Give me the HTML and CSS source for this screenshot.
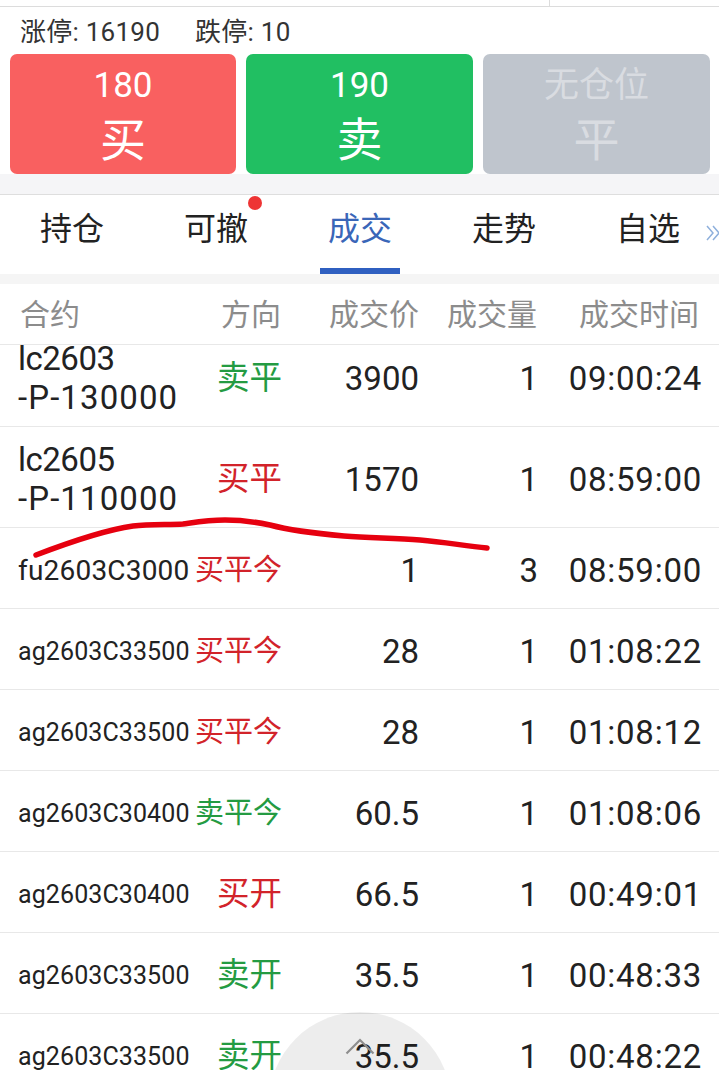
FILE: index.html
```html
<!DOCTYPE html>
<html lang="zh">
<head>
<meta charset="utf-8">
<title>成交</title>
<link rel="stylesheet" href="styles.css">
</head>
<body>
<div class="page">
  <div class="topbar"><span class="topdiv"></span></div>
  <div class="limits"><span>涨停: 16190</span><span>跌停: 10</span></div>
  <div class="actions">
    <div class="act buy"><span class="price">180</span><span class="label">买</span></div>
    <div class="act sell"><span class="price">190</span><span class="label">卖</span></div>
    <div class="act flat"><span class="price cjk">无仓位</span><span class="label">平</span></div>
  </div>
  <div class="band"></div>
  <nav class="tabs">
    <div class="tab">持仓</div>
    <div class="tab">可撤<i class="dot"></i></div>
    <div class="tab active">成交</div>
    <div class="tab">走势</div>
    <div class="tab">自选</div>
    <svg class="more" viewBox="0 0 16 20" width="16" height="20"><path d="M2 3l6 7-6 7M8 3l6 7-6 7" fill="none" stroke="#8fb0dc" stroke-width="1.5"/></svg>
  </nav>
  <div class="band2"></div>
  <div class="row head"><span>合约</span><span>方向</span><span>成交价</span><span>成交量</span><span>成交时间</span></div>
  <div class="list">
    <div class="row tall first"><span class="name long"><span class="l1">lc2603</span><span class="l2">-P-130000</span></span><span class="dir green">卖平</span><span>3900</span><span>1</span><span class="time">09:00:24</span></div>
    <div class="row tall"><span class="name long"><span class="l1">lc2605</span><span class="l2">-P-110000</span></span><span class="dir red">买平</span><span>1570</span><span>1</span><span class="time">08:59:00</span></div>
    <div class="row"><span class="name mid">fu2603C3000</span><span class="dir sm red">买平今</span><span>1</span><span>3</span><span class="time">08:59:00</span></div>
    <div class="row"><span class="name">ag2603C33500</span><span class="dir sm red">买平今</span><span>28</span><span>1</span><span class="time">01:08:22</span></div>
    <div class="row"><span class="name">ag2603C33500</span><span class="dir sm red">买平今</span><span>28</span><span>1</span><span class="time">01:08:12</span></div>
    <div class="row"><span class="name">ag2603C30400</span><span class="dir sm green">卖平今</span><span>60.5</span><span>1</span><span class="time">01:08:06</span></div>
    <div class="row"><span class="name">ag2603C30400</span><span class="dir red">买开</span><span>66.5</span><span>1</span><span class="time">00:49:01</span></div>
    <div class="row"><span class="name">ag2603C33500</span><span class="dir green">卖开</span><span>35.5</span><span>1</span><span class="time">00:48:33</span></div>
    <div class="row"><span class="name">ag2603C33500</span><span class="dir green">卖开</span><span>35.5</span><span>1</span><span class="time">00:48:22</span></div>
  </div>
  <div class="fab"></div>
  <svg class="fab-arrow" viewBox="0 0 30 17" width="30" height="17"><path d="M1.5 15.5L15 2l13.5 13.5" fill="none" stroke="#8e8e8e" stroke-width="2.2"/></svg>
  <svg class="scribble" viewBox="0 0 719 1070" width="719" height="1070"><path d="M36 555C70 542 105 530 133 526C150 524 170 525 183 524C197 522 208 520 225 520C245 520 256 522 270 525C285 529 310 533 344 536C370 538 395 538 420 540C445 542 465 546 487 548" fill="none" stroke="#e6000f" stroke-width="5.5" stroke-linecap="round" stroke-linejoin="round"/></svg>
</div>
</body>
</html>
```
FILE: styles.css
```css
* { box-sizing: border-box; }
html, body { margin: 0; padding: 0; background: #fff; }
body { font-family: Roboto, "Noto Sans CJK SC", sans-serif; color: #222; }
.page { position: relative; width: 719px; height: 1070px; overflow: hidden; background: #fff; }

.topbar { height: 7px; border-bottom: 1px solid #dcdcdc; display: flex; justify-content: flex-end; padding-right: 169px; }
.topdiv { width: 1px; background: #dcdcdc; }

.limits { height: 47px; padding: 0 0 3px 20px; display: flex; align-items: center; gap: 35px; font-size: 26px; letter-spacing: .25px; color: #333; }

.actions { display: grid; grid-template-columns: 226px 227px 227px; height: 120px; padding: 0 9px 0 10px; gap: 10px; }
.act { border-radius: 7px; color: #fff; display: flex; flex-direction: column; align-items: center; }
.buy { background: #f96060; }
.sell { background: #21bf62; }
.flat { background: #bfc5cd; color: #d9dce1; }
.price { font-size: 35px; line-height: 40px; margin-top: 12px; }
.label { font-size: 46px; line-height: 54px; margin-top: 7px; }

.band { height: 21px; background: #f5f5f7; border-bottom: 1px solid #dedede; }

.tabs { position: relative; height: 79px; display: flex; }
.tab { position: relative; flex: 0 0 144px; padding-top: 12px; text-align: center; font-size: 32px; line-height: 44px; color: #222; }
.tab.active { color: #3a66b8; }
.tab.active::after { content: ""; position: absolute; left: 32px; bottom: 0; width: 80px; height: 6px; background: #2f5fc0; }
.dot { position: absolute; left: 104px; top: 1px; width: 14px; height: 14px; border-radius: 50%; background: #ee3434; }
.more { position: absolute; right: -2px; top: 28px; }

.band2 { height: 10px; background: #f5f5f5; }

.row { display: grid; grid-template-columns: 190px 92px 137px 119px 164px; padding: 4px 17px 0 0; height: 81px; border-bottom: 1px solid #e8e8e8; align-items: center; font-size: 33px; line-height: 39px; text-align: right; white-space: nowrap; color: #222; }
.row.head { height: 61px; color: #8c8c8c; font-size: 30px; padding: 0 20px 0 0; grid-template-columns: 190px 91px 138px 118px 162px; }
.row.head span:first-child { padding-left: 20px; text-align: left; }
.row.tall { height: 101px; }
.row.first { margin-top: -19px; }
.list { height: 725px; overflow: hidden; }
.name { padding-left: 18px; text-align: left; font-size: 25px; letter-spacing: .1px; }
.name.mid { font-size: 28px; letter-spacing: .2px; }
.name.long { font-size: 33px; letter-spacing: 0; }
.l1 { display: block; letter-spacing: -.5px; }
.l2 { display: block; letter-spacing: 1.1px; }
.time { letter-spacing: .75px; }
.dir { font-size: 32.5px; }
.dir.sm { font-size: 29px; }
.green { color: #249b42; }
.red { color: #d2232a; }

.fab { position: absolute; left: 269px; top: 1012px; width: 182px; height: 182px; border-radius: 50%; background: rgba(0, 0, 0, .07); }
.fab-arrow { position: absolute; left: 345px; top: 1038px; }
.scribble { position: absolute; left: 0; top: 0; pointer-events: none; }
```
